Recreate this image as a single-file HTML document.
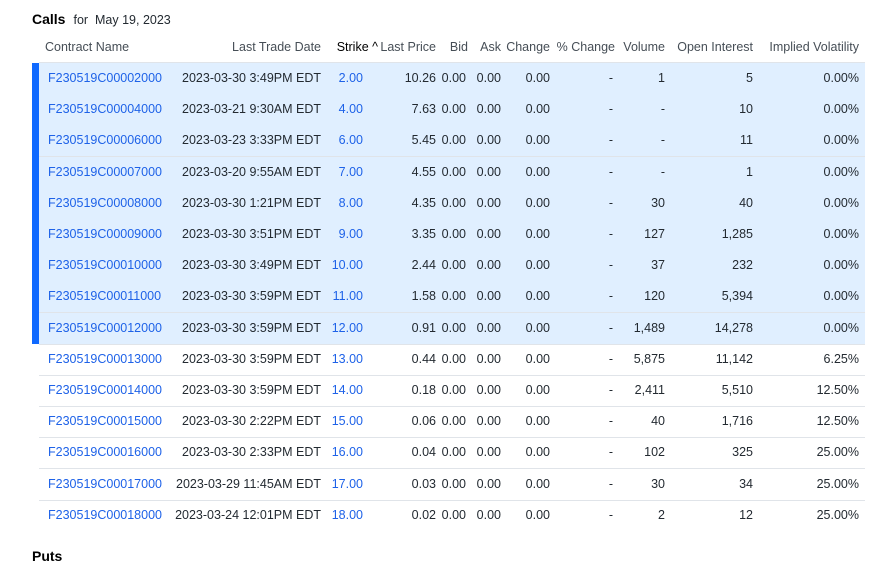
<!DOCTYPE html><html><head><style>
body{margin:0;width:878px;height:557px;overflow:hidden;background:#fff;font-family:"Liberation Sans",sans-serif;font-size:12.5px;color:#232a31;position:relative}
.t{position:absolute;top:11px;left:32px;font-size:14px;font-weight:bold;color:#000}
.t span{font-weight:normal;font-size:12.5px;margin-left:8px;color:#232a31}
.r{position:absolute;left:39px;width:826px;height:31px;border-bottom:1px solid #e0e4e9}
.h{border-bottom:1px solid #e0e4e9;color:#464e56}
.hl{background:#e0efff}
.r span{position:absolute;top:8px;white-space:nowrap;text-align:right}
.r .c{left:9px;color:#1e62e8;text-align:left}
.r .s{color:#1e62e8}
.bar{position:absolute;left:32px;top:63px;width:7px;height:281px;background:#0f69ff}
.p{position:absolute;top:548px;left:32px;font-size:14px;font-weight:bold;color:#000}
</style></head><body>
<div class="t">Calls<span>for &nbsp;May 19, 2023</span></div>
<div class="r h" style="top:32px;height:30px"><span class="c" style="left:6px;color:#464e56">Contract Name</span><span style="right:544px">Last Trade Date</span><span style="right:487px;color:#000">Strike ^</span><span style="right:429px">Last Price</span><span style="right:397px">Bid</span><span style="right:364px">Ask</span><span style="right:315px">Change</span><span style="right:250px">% Change</span><span style="right:200px">Volume</span><span style="right:112px">Open Interest</span><span style="right:6px">Implied Volatility</span></div>
<div class="bar"></div>
<div id="rows"></div>
<div class="p">Puts</div>
<script>
var d=[["F230519C00002000","2023-03-30 3:49PM EDT","2.00","10.26","1","5","0.00%"],
["F230519C00004000","2023-03-21 9:30AM EDT","4.00","7.63","-","10","0.00%"],
["F230519C00006000","2023-03-23 3:33PM EDT","6.00","5.45","-","11","0.00%"],
["F230519C00007000","2023-03-20 9:55AM EDT","7.00","4.55","-","1","0.00%"],
["F230519C00008000","2023-03-30 1:21PM EDT","8.00","4.35","30","40","0.00%"],
["F230519C00009000","2023-03-30 3:51PM EDT","9.00","3.35","127","1,285","0.00%"],
["F230519C00010000","2023-03-30 3:49PM EDT","10.00","2.44","37","232","0.00%"],
["F230519C00011000","2023-03-30 3:59PM EDT","11.00","1.58","120","5,394","0.00%"],
["F230519C00012000","2023-03-30 3:59PM EDT","12.00","0.91","1,489","14,278","0.00%"],
["F230519C00013000","2023-03-30 3:59PM EDT","13.00","0.44","5,875","11,142","6.25%"],
["F230519C00014000","2023-03-30 3:59PM EDT","14.00","0.18","2,411","5,510","12.50%"],
["F230519C00015000","2023-03-30 2:22PM EDT","15.00","0.06","40","1,716","12.50%"],
["F230519C00016000","2023-03-30 2:33PM EDT","16.00","0.04","102","325","25.00%"],
["F230519C00017000","2023-03-29 11:45AM EDT","17.00","0.03","30","34","25.00%"],
["F230519C00018000","2023-03-24 12:01PM EDT","18.00","0.02","2","12","25.00%"]];
var h="";d.forEach(function(r,i){var top=63+i*31.2;h+='<div class="r'+(i<9?' hl':'')+'" style="top:'+top+'px;'+(i==14?'border-bottom:none':'')+'"><span class="c">'+r[0]+'</span><span style="right:544px">'+r[1]+'</span><span class="s" style="right:502px">'+r[2]+'</span><span style="right:429px">'+r[3]+'</span><span style="right:399px">0.00</span><span style="right:364px">0.00</span><span style="right:315px">0.00</span><span style="right:252px">-</span><span style="right:200px">'+r[4]+'</span><span style="right:112px">'+r[5]+'</span><span style="right:6px">'+r[6]+'</span></div>';});
document.getElementById("rows").innerHTML=h;
</script>
</body></html>
